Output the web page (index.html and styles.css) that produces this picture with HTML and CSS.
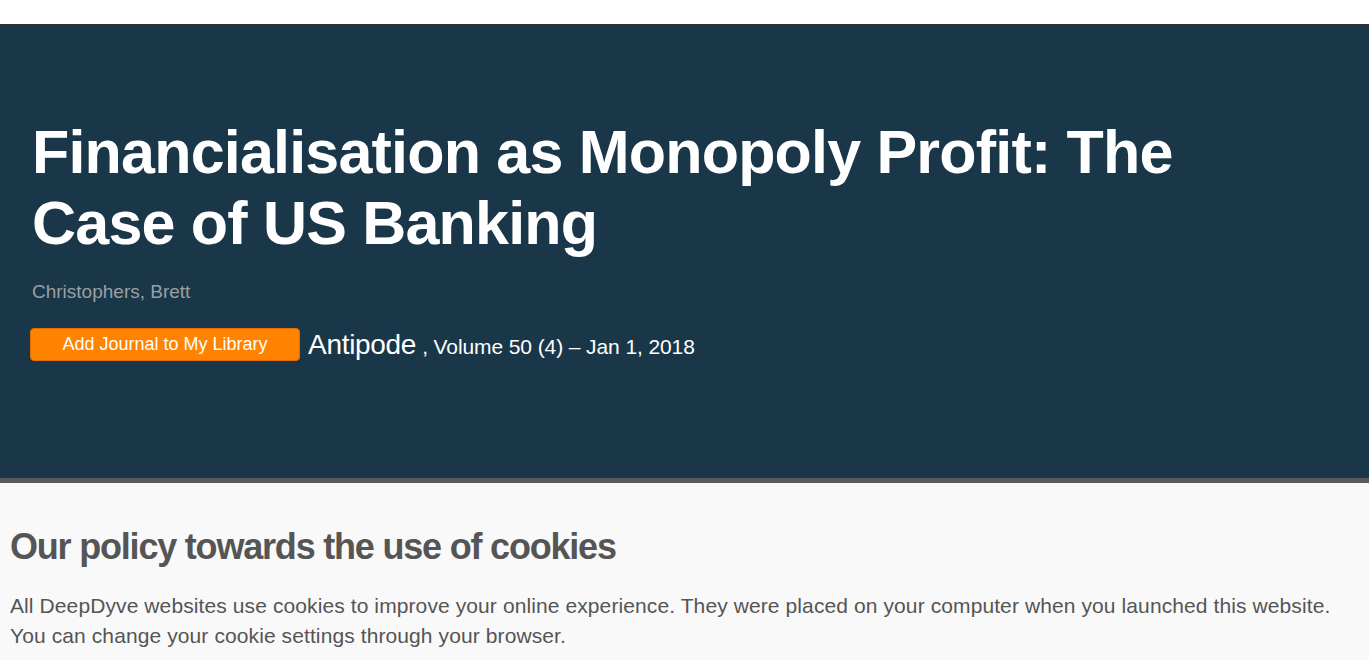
FILE: index.html
```html
<!DOCTYPE html>
<html lang="en">
<head>
    <meta charset="UTF-8">
    <title>Financialisation as Monopoly Profit: The Case of US Banking</title>
    <link rel="stylesheet" href="styles.css">
</head>
<body>
    <div class="topbar"></div>
    <header class="article-head">
        <h1 class="article-title">Financialisation as Monopoly Profit: The Case of US Banking</h1>
        <p class="authors">Christophers, Brett</p>
        <div class="journal-line">
            <button class="add-btn" type="button">Add Journal to My Library</button>
            <span class="journal-info">
                <span class="journal-name">Antipode</span>
                <span class="journal-meta">, Volume 50 (4) &ndash; Jan 1, 2018</span>
            </span>
        </div>
    </header>
    <section class="cookies">
        <h2>Our policy towards the use of cookies</h2>
        <p>All DeepDyve websites use cookies to improve your online experience. They were placed on your computer when you launched this website. You can change your cookie settings through your browser.</p>
    </section>
</body>
</html>
```

FILE: styles.css
```css
body {
    margin: 0;
    font-family: "Liberation Sans", Arial, sans-serif;
    background: #f9f9f9;
}
.topbar {
    height: 24px;
    background: #fff;
}
.article-head {
    box-sizing: border-box;
    height: 459px;
    padding: 92px 32px 0;
    background: #1a3749;
    border-top: 1px solid #2d3035;
    border-bottom: 5px solid #5a5a5a;
}
.article-title {
    margin: 0;
    color: #fff;
    font-size: 61px;
    line-height: 71px;
    font-weight: bold;
    letter-spacing: -0.8px;
    max-width: 1190px;
}
.authors {
    margin: 22px 0 0;
    color: #9a9fa3;
    font-size: 19px;
}
.journal-line {
    display: flex;
    align-items: center;
    margin-top: 25px;
    margin-left: -2px;
    color: #fff;
}
.add-btn {
    width: 270px;
    height: 33px;
    padding: 0;
    margin-right: 8px;
    background: #ff8200;
    border: 1px solid #e06e00;
    border-radius: 4px;
    color: #fff;
    font-family: "Liberation Sans", Arial, sans-serif;
    font-size: 18px;
}
.journal-info {
    display: flex;
    align-items: baseline;
}
.journal-name {
    font-size: 28px;
    letter-spacing: -0.3px;
}
.journal-meta {
    font-size: 21px;
    margin-left: 6px;
    letter-spacing: -0.1px;
}
.cookies {
    padding: 44px 10px 0;
    color: #555;
}
.cookies h2 {
    margin: 0;
    font-size: 36px;
    letter-spacing: -1.2px;
    line-height: 40px;
}
.cookies p {
    margin: 24px 0 0;
    font-size: 21px;
    line-height: 30px;
    letter-spacing: 0.1px;
}
```
